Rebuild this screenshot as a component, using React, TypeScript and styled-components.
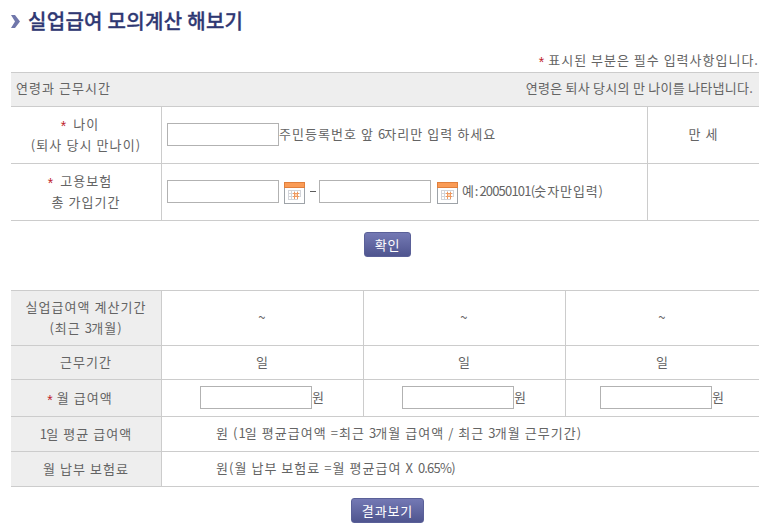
import React from 'react';
import styled, { createGlobalStyle, css } from 'styled-components';

const Global = createGlobalStyle`
  * { box-sizing: border-box; }
  html, body { margin: 0; background: #fff; }
  body {
    font-family: "Noto Sans CJK KR", "Noto Sans", sans-serif;
    font-size: 13px;
    color: #646464;
    overflow: hidden;
  }
`;

const Page = styled.main`
  width: 777px;
  height: 529px;
  padding: 7px 18px 0 11px;
`;

const Heading = styled.h1`
  display: flex;
  align-items: center;
  gap: 8px;
  height: 28px;
  margin: 0;
  color: #2f3873;
  font-size: 20px;
  font-weight: 500;
  -webkit-text-stroke: 0.3px #2f3873;
  line-height: 26px;
  letter-spacing: 0.3px;
  white-space: nowrap;
`;

const Text = styled.span<{ $gap?: number }>`
  display: block;
  white-space: nowrap;
  height: 21px;
  line-height: 20px;
  letter-spacing: ${p => p.$gap ?? 1.04}px;
`;

const Latin = styled.span`
  letter-spacing: -0.8px;
`;

const Star = styled.span<{ $space?: number }>`
  display: inline-block;
  height: 20px;
  color: #c0202c;
  font-family: "Liberation Sans", sans-serif;
  font-size: 14px;
  letter-spacing: 0;
  line-height: 25px;
  vertical-align: top;
  margin-right: ${p => p.$space ?? 7}px;
`;

const Notice = styled.div`
  display: flex;
  justify-content: flex-end;
  height: 37px;
  padding-top: 15px;
`;

const Table = styled.section`
  border-bottom: 1px solid #ccc;
`;

const Row = styled.div<{ $columns: string; $height: number }>`
  display: grid;
  grid-template-columns: ${p => p.$columns};
  height: ${p => p.$height}px;
  border-top: 1px solid #ccc;
`;

const Cell = styled.div<{ $left?: number }>`
  display: flex;
  align-items: center;
  border-left: 1px solid #ccc;
  padding-bottom: 1px;
  ${p => p.$left !== undefined
    ? css`padding-left: ${p.$left}px;`
    : css`justify-content: center;`}
`;

const Label = styled.div<{ $shaded?: boolean; $shift?: number }>`
  display: flex;
  flex-direction: column;
  align-items: center;
  justify-content: center;
  padding-right: ${p => p.$shift ?? 0}px;
  background: ${p => (p.$shaded ? '#eee' : '#fff')};
`;

const SubLabel = styled(Text)<{ $shift: number }>`
  padding-right: ${p => p.$shift}px;
`;

const TableHead = styled.div`
  display: flex;
  justify-content: space-between;
  height: 34px;
  padding: 5px 6px 0 5px;
  border-top: 1px solid #ccc;
  background: #eee;
`;

const Input = styled.input`
  width: 112px;
  height: 23px;
  margin: 0;
  padding: 0 3px;
  border: 1px solid #b2b2b2;
  border-radius: 0;
  background: #fff;
  outline: none;
`;

const DateButton = styled.button<{ $before: number; $after: number }>`
  display: block;
  width: 21px;
  height: 22px;
  margin: 3px ${p => p.$after}px 0 ${p => p.$before}px;
  padding: 0;
  border: 0;
  background: none;
`;

const Dash = styled.span`
  width: 6px;
  height: 1px;
  margin-right: 3px;
  background: #5c5c5c;
`;

const Actions = styled.div<{ $height: number }>`
  display: flex;
  justify-content: center;
  height: ${p => p.$height}px;
  padding-top: 11px;
`;

const Button = styled.button<{ $width: number }>`
  width: ${p => p.$width}px;
  height: 25px;
  margin: 0 0 0 4px;
  padding: 0 0 1px 1px;
  border: 1px solid #5a6098;
  border-radius: 3px;
  background: linear-gradient(#7479b4, #4f558f);
  color: #fff;
  font: 400 13px/21px "Noto Sans CJK KR", sans-serif;
  letter-spacing: 0.9px;
  white-space: nowrap;
`;

function Calendar() {
  return (
    <svg width="21" height="22" viewBox="0 0 21 22" shapeRendering="crispEdges" display="block">
      <rect x="0.5" y="0.5" width="20" height="21" fill="#fff" stroke="#9ea3a8" />
      <rect width="21" height="6" fill="#e07f3c" />
      <rect x="1" y="1" width="19" height="4" fill="#fa9b55" />
      <path d="M4 8.5h13M4 11.5h13M4 14.5h13M4 17.5h10M4.5 8v10M7.5 8v10M10.5 8v10M13.5 8v10M16.5 8v7" stroke="#d3d5da" fill="none" />
      <path d="M9 11.5h6M9 14.5h6M10.5 10v7M13.5 10v7" stroke="#ef9a62" fill="none" />
      <rect x="11" y="12" width="2" height="2" fill="#f9d4b5" />
    </svg>
  );
}

const TOP = '150px 486px 112px';
const THREE = '150px 202px 202px 194px';
const WIDE = '150px 598px';

export default function App() {
  return (
    <>
      <Global />
      <Page>
        <Heading>
          <svg width="9" height="15" viewBox="0 0 9 15">
            <path d="M0 1h4l5 6.5-5 6.5H0l4-6.5z" fill="#7077ab" />
          </svg>
          실업급여 모의계산 해보기
        </Heading>
        <Notice>
          <Text $gap={1}><Star $space={4}>*</Star>표시된 부분은 필수 입력사항입니다.</Text>
        </Notice>

        <Table>
          <TableHead>
            <Text>연령과 근무시간</Text>
            <Text $gap={0.25}>연령은 퇴사 당시의 만 나이를 나타냅니다.</Text>
          </TableHead>
          <Row $columns={TOP} $height={57}>
            <Label>
              <SubLabel $shift={12}><Star>*</Star>나이</SubLabel>
              <Text $gap={1.1}>(퇴사 당시 만나이)</Text>
            </Label>
            <Cell $left={5}>
              <Input aria-label="나이" />
              <Text>주민등록번호 앞 <Latin>6</Latin>자리만 입력 하세요</Text>
            </Cell>
            <Cell><Text>만 세</Text></Cell>
          </Row>
          <Row $columns={TOP} $height={57}>
            <Label>
              <SubLabel $shift={12}><Star>*</Star>고용보험</SubLabel>
              <Text>총 가입기간</Text>
            </Label>
            <Cell $left={5}>
              <Input aria-label="시작일" />
              <DateButton $before={5} $after={5} aria-label="달력"><Calendar /></DateButton>
              <Dash />
              <Input aria-label="종료일" />
              <DateButton $before={6} $after={4} aria-label="달력"><Calendar /></DateButton>
              <Text $gap={0.9}>예:<Latin>20050101(</Latin>숫자만입력)</Text>
            </Cell>
            <Cell />
          </Row>
        </Table>
        <Actions $height={69}><Button $width={47}>확인</Button></Actions>

        <Table>
          <Row $columns={THREE} $height={55}>
            <Label $shaded>
              <Text>실업급여액 계산기간</Text>
              <Text>(최근 <Latin>3</Latin>개월)</Text>
            </Label>
            {[0, 1, 2].map(i => <Cell key={i}><Text>~</Text></Cell>)}
          </Row>
          <Row $columns={THREE} $height={34}>
            <Label $shaded><Text>근무기간</Text></Label>
            {[0, 1, 2].map(i => <Cell key={i}><Text>일</Text></Cell>)}
          </Row>
          <Row $columns={THREE} $height={37}>
            <Label $shaded $shift={12}><Text><Star $space={4}>*</Star>월 급여액</Text></Label>
            {[0, 1, 2].map(i => (
              <Cell key={i}><Input aria-label="월 급여액" /><Text>원</Text></Cell>
            ))}
          </Row>
          <Row $columns={WIDE} $height={35}>
            <Label $shaded><Text><Latin>1</Latin>일 평균 급여액</Text></Label>
            <Cell $left={54}>
              <Text>원 (<Latin>1</Latin>일 평균급여액 =최근 <Latin>3</Latin>개월 급여액 / 최근 <Latin>3</Latin>개월 근무기간)</Text>
            </Cell>
          </Row>
          <Row $columns={WIDE} $height={35}>
            <Label $shaded><Text>월 납부 보험료</Text></Label>
            <Cell $left={54}>
              <Text>원(월 납부 보험료 =월 평균급여 X <Latin>0.65%</Latin>)</Text>
            </Cell>
          </Row>
        </Table>
        <Actions $height={40}><Button $width={73}>결과보기</Button></Actions>
      </Page>
    </>
  );
}
